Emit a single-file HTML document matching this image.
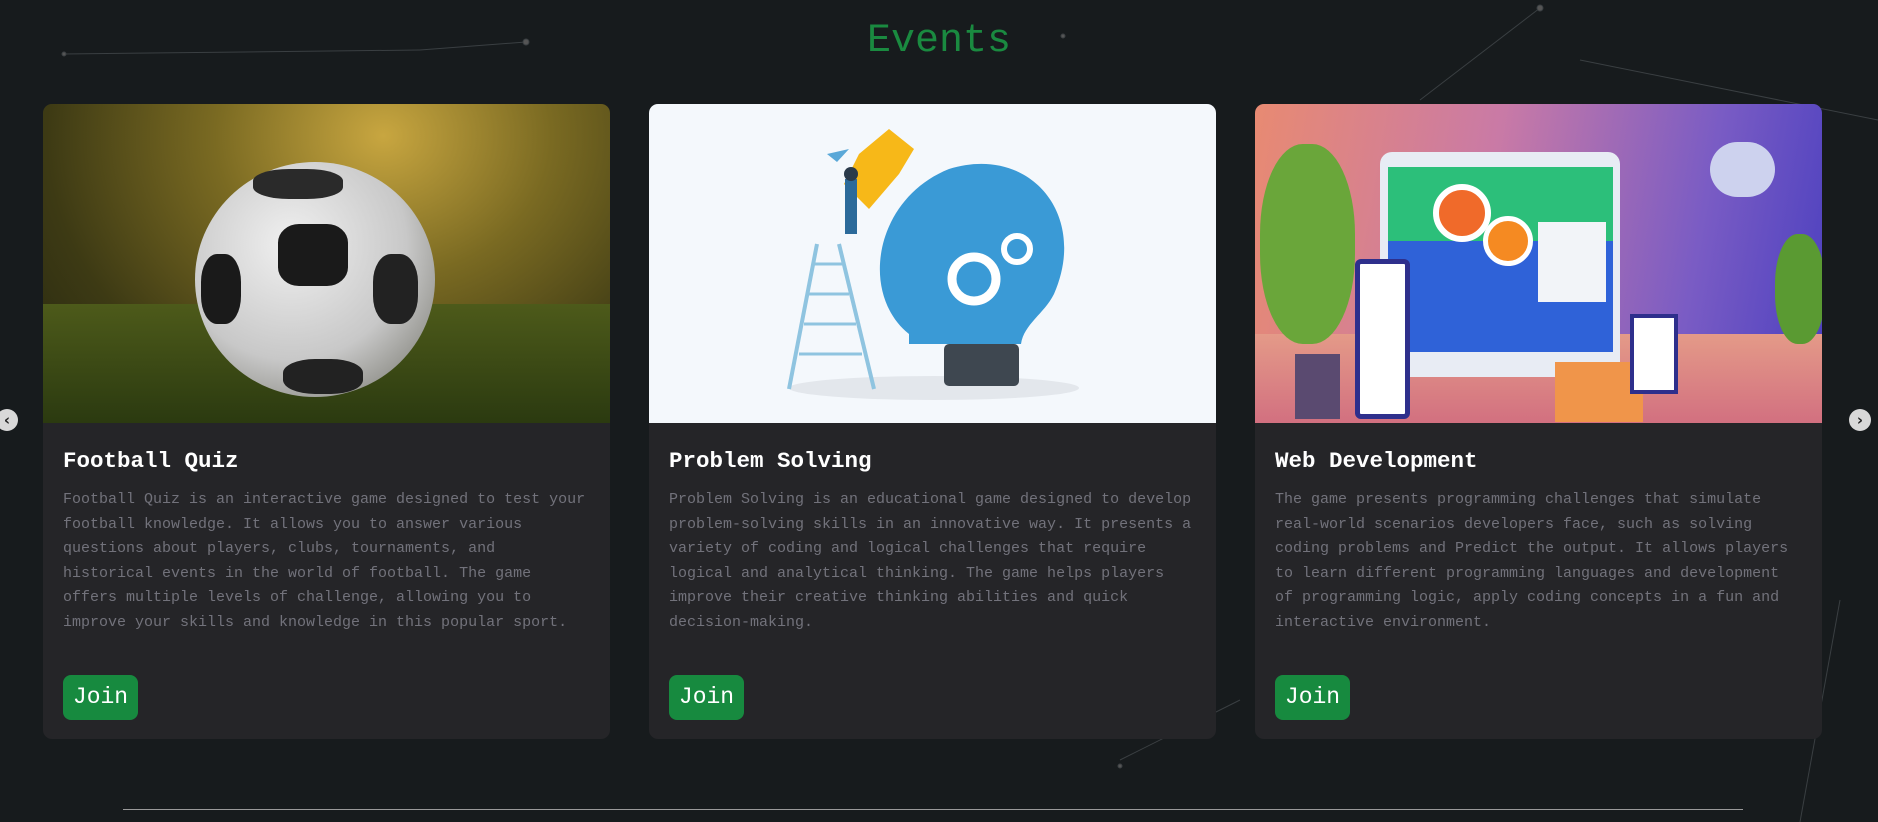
<!DOCTYPE html>
<html><head><meta charset="utf-8"><style>
*{margin:0;padding:0;box-sizing:border-box}
body{width:1878px;height:822px;background:#171b1d;overflow:hidden;position:relative;font-family:"Liberation Mono",monospace}
h1{position:absolute;top:19px;left:0;width:1878px;text-align:center;font-size:40px;font-weight:normal;color:#1a8a40;font-family:"Liberation Mono",monospace}
.card{position:absolute;top:104px;width:567px;height:635px;background:#252528;border-radius:9px;overflow:hidden}
.img{height:319px;position:relative;overflow:hidden}
.card h2{position:absolute;left:20px;top:344px;font-size:22.5px;color:#fff;font-weight:bold}
.card p{position:absolute;left:20px;top:384px;width:530px;font-size:15px;line-height:24.5px;color:#72727b}
.btn{position:absolute;left:20px;top:571px;width:75px;height:45px;background:#178a3f;border-radius:8px;color:#fff;font-size:23px;line-height:45px;text-align:center}
.arrow{position:absolute;top:409px;width:22px;height:22px;border-radius:50%;background:#d8d8d8;color:#222;font-size:15px;line-height:22px;text-align:center;font-weight:bold;font-family:"DejaVu Sans",sans-serif}
.line{position:absolute;left:123px;top:809px;width:1620px;height:1px;background:#9a9a9a}
svg.bg{position:absolute;left:0;top:0}
</style></head><body>
<svg class="bg" width="1878" height="822"><g stroke="#3a3f42" stroke-width="1" fill="#555">
<line x1="64" y1="54" x2="420" y2="50"/><line x1="420" y1="50" x2="526" y2="42"/><line x1="1540" y1="8" x2="1420" y2="100"/><line x1="1580" y1="60" x2="1878" y2="120"/><line x1="1120" y1="760" x2="1240" y2="700"/><line x1="1800" y1="822" x2="1840" y2="600"/><circle cx="64" cy="54" r="2"/><circle cx="526" cy="42" r="3"/><circle cx="1540" cy="8" r="3"/><circle cx="1063" cy="36" r="2"/><circle cx="1120" cy="766" r="2"/></g></svg>
<h1>Events</h1>

<div class="card" style="left:43px">
<div class="img" style="background:radial-gradient(ellipse at 60% 10%,#c8a640 0%,#7a6a22 35%,#3d3a14 70%,#232510 100%)">
<div style="position:absolute;left:0;top:200px;width:567px;height:119px;background:linear-gradient(#4d5a1a,#2b3a10)"></div>
<div style="position:absolute;left:152px;top:58px;width:240px;height:235px;border-radius:50%;background:radial-gradient(circle at 40% 35%,#f0f0f0,#c8c8c8 55%,#6a6a60 100%)"></div>
<div style="position:absolute;left:235px;top:120px;width:70px;height:62px;background:#1a1a1a;border-radius:30%"></div>
<div style="position:absolute;left:158px;top:150px;width:40px;height:70px;background:#1a1a1a;border-radius:40%"></div>
<div style="position:absolute;left:330px;top:150px;width:45px;height:70px;background:#222;border-radius:40%"></div>
<div style="position:absolute;left:240px;top:255px;width:80px;height:35px;background:#222;border-radius:40%"></div>
<div style="position:absolute;left:210px;top:65px;width:90px;height:30px;background:#2a2a2a;border-radius:40%"></div>
</div>
<h2>Football Quiz</h2>
<p>Football Quiz is an interactive game designed to test your football knowledge. It allows you to answer various questions about players, clubs, tournaments, and historical events in the world of football. The game offers multiple levels of challenge, allowing you to improve your skills and knowledge in this popular sport.</p>
<div class="btn">Join</div>
</div>

<div class="card" style="left:649px">
<div class="img" style="background:#f4f8fc">
<svg width="567" height="319">
<ellipse cx="285" cy="284" rx="145" ry="12" fill="#e3e7ec"/>
<line x1="168" y1="140" x2="140" y2="285" stroke="#8fc4e0" stroke-width="4"/><line x1="190" y1="140" x2="225" y2="285" stroke="#8fc4e0" stroke-width="4"/>
<g stroke="#8fc4e0" stroke-width="3"><line x1="165" y1="160" x2="193" y2="160"/><line x1="160" y1="190" x2="200" y2="190"/><line x1="155" y1="220" x2="207" y2="220"/><line x1="150" y1="250" x2="213" y2="250"/></g>
<path d="M260 230 C210 190 225 95 300 65 C380 40 440 110 405 190 C395 210 375 220 372 240 L260 240 Z" fill="#3a9ad6"/>
<path d="M210 50 L240 25 L265 45 L250 70 L220 105 L195 80 Z" fill="#f7b818"/>
<circle cx="325" cy="175" r="22" fill="none" stroke="#fff" stroke-width="9"/><circle cx="368" cy="145" r="13" fill="none" stroke="#fff" stroke-width="6"/>
<rect x="295" y="240" width="75" height="42" rx="5" fill="#3e4750"/>
<rect x="196" y="75" width="12" height="55" fill="#2b6a9a"/><circle cx="202" cy="70" r="7" fill="#2a3a4a"/>
<path d="M178 50 L200 45 L188 58 Z" fill="#5aa8d8"/>
</svg></div>
<h2>Problem Solving</h2>
<p>Problem Solving is an educational game designed to develop problem-solving skills in an innovative way. It presents a variety of coding and logical challenges that require logical and analytical thinking. The game helps players improve their creative thinking abilities and quick decision-making.</p>
<div class="btn">Join</div>
</div>

<div class="card" style="left:1255px">
<div class="img" style="background:linear-gradient(100deg,#e88a72 0%,#c97aa6 40%,#7a5cc4 75%,#4a3fbf 100%)">
<div style="position:absolute;left:0;top:230px;width:567px;height:89px;background:linear-gradient(#e49a88,#d27080)"></div>
<div style="position:absolute;left:5px;top:40px;width:95px;height:200px;border-radius:45%;background:#6aa63a"></div>
<div style="position:absolute;left:40px;top:250px;width:45px;height:65px;background:#5a4a70"></div>
<div style="position:absolute;left:125px;top:48px;width:240px;height:225px;border-radius:12px;background:#e8ecf4"></div>
<div style="position:absolute;left:133px;top:63px;width:225px;height:185px;background:linear-gradient(#2cbf7a 40%,#2f62d8 40%)"></div>
<div style="position:absolute;left:178px;top:80px;width:58px;height:58px;border-radius:50%;background:#f06a2a;border:6px solid #fff"></div>
<div style="position:absolute;left:228px;top:112px;width:50px;height:50px;border-radius:50%;background:#f58a22;border:5px solid #fff"></div>
<div style="position:absolute;left:283px;top:118px;width:68px;height:80px;background:#f2f4f8"></div>
<div style="position:absolute;left:100px;top:155px;width:55px;height:160px;background:#fff;border:5px solid #2e2f8c;border-radius:6px"></div>
<div style="position:absolute;left:300px;top:258px;width:88px;height:60px;background:#f0954a"></div>
<div style="position:absolute;left:375px;top:210px;width:48px;height:80px;background:#fff;border:4px solid #2e2f8c"></div>
<div style="position:absolute;left:455px;top:38px;width:65px;height:55px;border-radius:30px;background:#cdd2ee"></div>
<div style="position:absolute;left:520px;top:130px;width:50px;height:110px;border-radius:45%;background:#5a9a32"></div>
</div>
<h2>Web Development</h2>
<p>The game presents programming challenges that simulate real-world scenarios developers face, such as solving coding problems and Predict the output. It allows players to learn different programming languages and development of programming logic, apply coding concepts in a fun and interactive environment.</p>
<div class="btn">Join</div>
</div>

<div class="arrow" style="left:-4px">‹</div>
<div class="arrow" style="left:1849px">›</div>
<div class="line"></div>
</body></html>
